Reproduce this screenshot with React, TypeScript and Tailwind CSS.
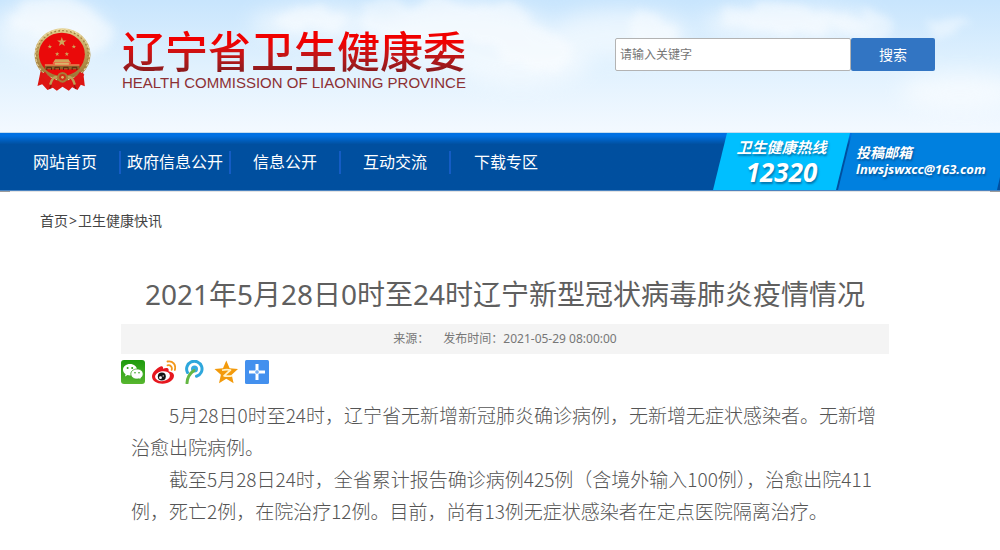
import type { ReactNode } from 'react';

const NAV_ITEMS = ['网站首页', '政府信息公开', '信息公开', '互动交流', '下载专区'];

const PARAGRAPHS = [
  '5月28日0时至24时，辽宁省无新增新冠肺炎确诊病例，无新增无症状感染者。无新增治愈出院病例。',
  '截至5月28日24时，全省累计报告确诊病例425例（含境外输入100例），治愈出院411例，死亡2例，在院治疗12例。目前，尚有13例无症状感染者在定点医院隔离治疗。',
];

const STAR = '0,-10 2.4,-3.1 9.5,-3.1 3.8,1.2 5.9,8.1 0,4 -5.9,8.1 -3.8,1.2 -9.5,-3.1 -2.4,-3.1';

function Clouds() {
  return (
    <svg
      className="absolute inset-0 h-full w-full"
      viewBox="0 0 1000 133"
      preserveAspectRatio="none"
      aria-hidden="true"
    >
      <defs>
        <filter id="soft" x="-20%" y="-40%" width="140%" height="180%">
          <feGaussianBlur stdDeviation="10" />
        </filter>
        <filter id="puff" x="-20%" y="-40%" width="140%" height="180%">
          <feTurbulence type="fractalNoise" baseFrequency="0.04" numOctaves="3" seed="4" result="noise" />
          <feDisplacementMap in="SourceGraphic" in2="noise" scale="30" />
          <feGaussianBlur stdDeviation="4" />
        </filter>
      </defs>
      <g fill="#fff" filter="url(#soft)" opacity="0.55">
        <ellipse cx="50" cy="30" rx="56" ry="30" />
        <ellipse cx="320" cy="24" rx="70" ry="18" />
        <ellipse cx="460" cy="34" rx="90" ry="34" />
        <ellipse cx="520" cy="60" rx="70" ry="26" />
        <ellipse cx="620" cy="34" rx="70" ry="24" />
        <ellipse cx="790" cy="24" rx="90" ry="18" />
        <ellipse cx="960" cy="92" rx="60" ry="18" />
      </g>
      <g fill="#fff" filter="url(#puff)" opacity="0.4">
        <ellipse cx="50" cy="16" rx="44" ry="20" />
        <ellipse cx="92" cy="34" rx="20" ry="20" />
        <ellipse cx="310" cy="20" rx="36" ry="12" />
        <ellipse cx="385" cy="18" rx="26" ry="20" />
        <ellipse cx="440" cy="20" rx="40" ry="20" />
        <ellipse cx="500" cy="28" rx="36" ry="22" />
        <ellipse cx="535" cy="52" rx="36" ry="20" />
        <ellipse cx="655" cy="34" rx="24" ry="16" />
        <ellipse cx="865" cy="26" rx="28" ry="14" />
        <ellipse cx="780" cy="20" rx="60" ry="14" />
        <ellipse cx="950" cy="28" rx="22" ry="10" />
      </g>
    </svg>
  );
}

function Emblem() {
  return (
    <svg className="h-[63px] w-[57px] shrink-0" viewBox="42 42 170 189" aria-hidden="true">
      <defs>
        <linearGradient id="gold" x1="0" y1="0" x2="0" y2="1">
          <stop offset="0" stopColor="#e3cf8e" />
          <stop offset="0.5" stopColor="#b99a55" />
          <stop offset="1" stopColor="#9a7030" />
        </linearGradient>
      </defs>
      <path d="M62 168 L52 216 L66 211 L82 228 L98 221 L110 230 L127 218 L146 230 L156 220 L172 228 L182 212 L194 217 L188 166 Z" fill="#dd1512" />
      <path d="M88 190 Q98 212 88 224 M168 190 Q156 212 168 224" stroke="#96150d" strokeWidth="4" fill="none" />
      <ellipse cx="127" cy="122" rx="84" ry="79" fill="url(#gold)" />
      <ellipse cx="127" cy="122" rx="77" ry="72" fill="none" stroke="#a08040" strokeWidth="4" strokeDasharray="5 7" />
      <ellipse cx="127" cy="122" rx="81" ry="76" fill="none" stroke="#f1e0ac" strokeWidth="3" strokeDasharray="8 6" />
      <ellipse cx="125" cy="121" rx="69" ry="65" fill="#ea0a0a" />
      <g fill="#cfa55a">
        <polygon points={STAR} transform="translate(125 84) scale(1.5)" />
        <polygon points={STAR} transform="translate(89 98) scale(.7)" />
        <polygon points={STAR} transform="translate(161 98) scale(.7)" />
        <polygon points={STAR} transform="translate(111 120) scale(.7)" />
        <polygon points={STAR} transform="translate(140 120) scale(.7)" />
        <path d="M105 136 H145 L150 144 H100 Z M104 146 H146 V152 H104 Z" />
      </g>
      <path d="M74 155 H178 V166 H74 Z" fill="#8c6428" />
      <path d="M74 153 H178 M98 147 H152" stroke="#e5c57b" strokeWidth="3" />
      <path d="M80 168 V160 H94 V168 M104 168 V160 H118 V168 M130 168 V160 H144 V168 M156 168 V160 H170 V168" stroke="#5b2411" strokeWidth="3" fill="none" />
      <path d="M68 178 Q86 204 106 202 M186 178 Q168 204 148 202" stroke="#e01515" strokeWidth="16" fill="none" />
      <path d="M90 212 Q98 184 112 190 Q127 206 142 190 Q156 184 164 212" stroke="#c0a056" strokeWidth="7" fill="none" />
      <circle cx="127" cy="190" r="16" fill="#a87c38" />
      <circle cx="127" cy="190" r="10" fill="#cf3218" />
      <circle cx="127" cy="190" r="4" fill="#dfbd6c" />
    </svg>
  );
}

function ShareLink({ label, children }: { label: string; children: ReactNode }) {
  return (
    <a href="#" aria-label={label} className="block size-6">
      <svg viewBox="0 0 24 24" className="size-6">
        {children}
      </svg>
    </a>
  );
}

function ShareBar() {
  return (
    <div className="mt-[6px] flex gap-[7px]">
      <ShareLink label="微信">
        <defs>
          <linearGradient id="wx" x1="0" y1="0" x2="0" y2="1">
            <stop offset="0" stopColor="#1c9a0c" />
            <stop offset="1" stopColor="#57b62f" />
          </linearGradient>
        </defs>
        <rect width="24" height="24" rx="3" fill="url(#wx)" />
        <path d="M9 4c-4 0-7 2.500-7 5.700 0 1.900 1 3.400 2.600 4.500L4 16.400l2.500-1.300c.8.200 1.600.3 2.500.3 4 0 7-2.500 7-5.700S13 4 9 4z" fill="#fff" />
        <path d="M16 9c-3.500 0-6.200 2.200-6.200 5s2.700 5.100 6.200 5.100c.7 0 1.400-.1 2.100-.3l2.100 1.200-.5-1.900c1.500-1 2.500-2.400 2.500-4.100C22.200 11.200 19.500 9 16 9z" fill="#fff" stroke="#38a51f" strokeWidth=".8" />
        <g fill="#2c9f18">
          <circle cx="6.600" cy="8" r="1" />
          <circle cx="11.200" cy="8" r="1" />
          <circle cx="14" cy="12.700" r=".8" />
          <circle cx="18" cy="12.700" r=".8" />
        </g>
      </ShareLink>
      <ShareLink label="新浪微博">
        <path d="M8.500 6.500c1.700-.8 3 .1 2.500 2.200 2.800-1.200 5.800-1.200 5.700 1.300 0 .8-.4 1.200.4 1.500 2.500.5 4.900 1.600 4.900 4 0 4.500-5 8.200-11.500 8.200-5.700 0-10.500-2.700-10.500-7.200C0 12.600 4.500 8.300 8.500 6.500z" fill="#e6171e" />
        <ellipse cx="10.500" cy="16.200" rx="7.500" ry="4.900" transform="rotate(-7 10.500 16.200)" fill="#fff" />
        <circle cx="9.800" cy="16.600" r="4" fill="#161616" />
        <circle cx="8.500" cy="17.700" r="1.400" fill="#fff" />
        <circle cx="11.200" cy="15.900" r=".7" fill="#fff" />
        <path d="M15.500 5.300c3-.6 5 1.800 4.200 4.500M15.500 1.500c5.200-1.200 8.900 3.500 7.300 8.500" stroke="#f2981b" strokeWidth="1.800" strokeLinecap="round" fill="none" />
      </ShareLink>
      <ShareLink label="腾讯微博">
        <path d="M4.500 12.500A7.700 7.700 0 1 1 13.500 16.300" stroke="#2ea7dc" strokeWidth="3" fill="none" strokeLinecap="round" />
        <circle cx="11.500" cy="9" r="3.500" fill="#35abe0" />
        <path d="M11 10.500C6.500 13.500 4.300 18 4 23" stroke="#64b743" strokeWidth="3" fill="none" strokeLinecap="round" />
      </ShareLink>
      <ShareLink label="QQ空间">
        <path d="M12.300.500l3.300 7.800 8.400.700-6.300 5.700 1.900 8.500-7.300-4.400L5 23.200l1.900-8.500L.500 9l8.500-.700z" fill="#f39a0b" />
        <path d="M8 10.300q4-1 8.500-.3L10 15.800q4.500.9 8.500-.2" stroke="#fff2c8" strokeWidth="1.700" fill="none" strokeLinejoin="round" />
      </ShareLink>
      <ShareLink label="更多">
        <rect width="24" height="24" rx="1.500" fill="#4390ee" />
        <path d="M10.500 4h3v6.500H20v3h-6.500V20h-3v-6.500H4v-3h6.500z" fill="#fff" />
        <path d="M12 10v4M10 12h4" stroke="#4390ee" strokeWidth="1" />
      </ShareLink>
    </div>
  );
}

function Header() {
  return (
    <header className="relative border-b border-[#c3dcf0] bg-linear-to-b from-[#c8e5fd] via-[#e0f1fe] to-[#f3f9ff]">
      <Clouds />
      <div className="relative flex items-start justify-between pt-7 pr-[65px] pb-[41px] pl-[34px]">
        <div className="flex items-start gap-[31px]">
          <Emblem />
          <div className="whitespace-nowrap">
            <h1 className="bg-linear-to-b from-[#f00000] from-30% to-[#8c1a1d] to-90% bg-clip-text text-[43px] leading-[48px] font-medium text-transparent">
              辽宁省卫生健康委
            </h1>
            <p className="font-['Liberation_Sans'] text-[15px] leading-[14px] text-[#8c3034]">
              HEALTH COMMISSION OF LIAONING PROVINCE
            </p>
          </div>
        </div>
        <form className="mt-[10px] flex" onSubmit={e => e.preventDefault()}>
          <input
            type="text"
            aria-label="请输入关键字"
            placeholder="请输入关键字"
            className="h-[33px] w-[236px] rounded-xs border border-[#b3b3b3] bg-white px-1 text-xs placeholder:text-[#757575]"
          />
          <button type="submit" className="h-[33px] w-[84px] rounded-xs bg-[#3275c3] text-sm text-white">
            搜索
          </button>
        </form>
      </div>
    </header>
  );
}

function NavBar() {
  return (
    <nav className="flex h-[58px] justify-between border-b border-[#4c84c0] bg-linear-to-b from-[#0070e2] from-5% to-[#004f9f] to-20% pl-[11px]">
      <ul className="flex pt-[18px]">
        {NAV_ITEMS.map(item => (
          <li
            key={item}
            className="h-[23px] w-[110px] border-r-2 border-[#145cc4] text-center text-base leading-[23px] whitespace-nowrap text-white last:border-r-0"
          >
            <a href="#">{item}</a>
          </li>
        ))}
      </ul>
      <div className="flex font-bold whitespace-nowrap text-white italic text-shadow-[1px_2px_2px_rgb(0_50_100/0.5)]">
        <div className="w-[137px] bg-[#00bfff] pt-1 text-center [clip-path:polygon(14px_0,100%_0,calc(100%_-_14px)_100%,0_100%)]">
          <p className="text-[15px] leading-5">卫生健康热线</p>
          <p className="text-[26px] leading-[30px]">12320</p>
        </div>
        <div className="-ml-[14px] w-[164px] bg-[#0080df] pt-3 pl-5 [clip-path:polygon(16px_0,100%_0,100%_44px,calc(100%_-_3px)_100%,2px_100%)]">
          <p className="text-sm leading-4">投稿邮箱</p>
          <p className="text-[13px] leading-4">lnwsjswxcc@163.com</p>
        </div>
      </div>
    </nav>
  );
}

export default function App() {
  return (
    <div className="min-h-screen bg-white font-['Noto_Sans','Noto_Sans_CJK_SC',sans-serif]">
      <Header />
      <NavBar />
      <div className="flex h-px justify-between bg-[#e4e4e4]">
        <span className="w-[10px] bg-[#9b9b9b]" />
        <span className="w-[10px] bg-[#9b9b9b]" />
      </div>

      <main>
        <div className="mt-[19px] ml-10 flex gap-px text-sm leading-5 text-[#444]">
          <a href="#">首页</a>
          <span>&gt;</span>
          <a href="#">卫生健康快讯</a>
        </div>

        <article className="mr-[111px] ml-[121px] pt-[43px]">
          <h2 className="text-center text-[28px] leading-10 text-[#5f5f5f]">
            2021年5月28日0时至24时辽宁新型冠状病毒肺炎疫情情况
          </h2>
          <div className="mt-[10px] flex h-[30px] items-center justify-center gap-[14px] bg-[#f4f4f4] text-xs text-[#777]">
            <span>来源：</span>
            <span>发布时间：2021-05-29 08:00:00</span>
          </div>
          <ShareBar />
          <div className="mt-[15px] pr-3 pl-[10px] font-['Noto_Sans_CJK_SC',sans-serif] text-[19px] leading-8 font-light text-[#555]">
            {PARAGRAPHS.map(text => (
              <p key={text} className="indent-[2em]">
                {text}
              </p>
            ))}
          </div>
        </article>
      </main>
    </div>
  );
}
